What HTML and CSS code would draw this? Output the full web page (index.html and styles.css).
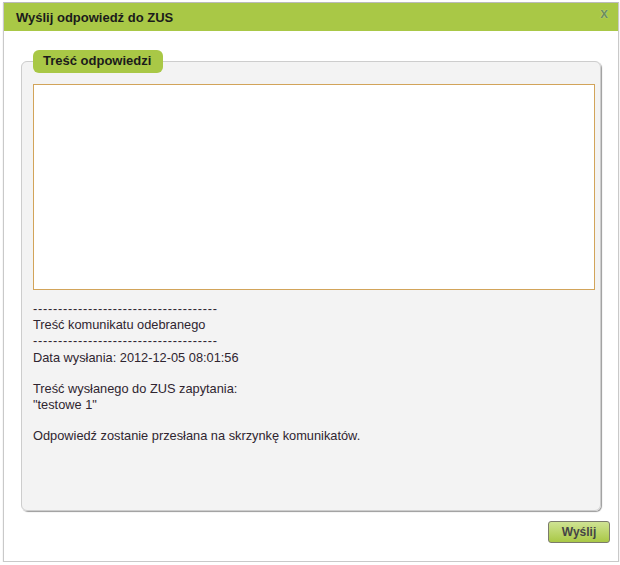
FILE: index.html
```html
<!DOCTYPE html>
<html lang="pl">
<head>
    <meta charset="UTF-8">
    <title>Wyślij odpowiedź do ZUS</title>
    <link rel="stylesheet" href="styles.css">
</head>
<body>
<div class="dialog">
    <div class="dialog-header">
        <span class="dialog-title">Wyślij odpowiedź do ZUS</span>
        <span class="dialog-close">x</span>
    </div>
    <div class="dialog-body">
        <fieldset class="panel">
            <legend>Treść odpowiedzi</legend>
            <textarea class="reply"></textarea>
            <div class="message">
                <p><span class="rule">-------------------------------------</span><br>Treść komunikatu odebranego<br><span class="rule">-------------------------------------</span><br>Data wysłania: 2012-12-05 08:01:56</p>
                <p>Treść wysłanego do ZUS zapytania:<br>"testowe 1"</p>
                <p>Odpowiedź zostanie przesłana na skrzynkę komunikatów.</p>
            </div>
        </fieldset>
        <div class="actions">
            <button class="send">Wyślij</button>
        </div>
    </div>
</div>
</body>
</html>
```

FILE: styles.css
```css
/* page */
body {
    margin: 0;
    padding: 2px 0 0 3px;
    background-color: #fff;
    font-family: "Liberation Sans", Arial, sans-serif;
    color: #333;
}

/* dialog window */
.dialog {
    width: 614px;
    height: 558px;
    border: 1px solid #c9c9c9;
    border-top-color: #bbb;
    background-color: #fff;
    box-shadow: 0 1px 1px #ccc;
}

.dialog-header {
    background-color: #a9c846;
    height: 28px;
    display: flex;
    align-items: center;
    justify-content: space-between;
    padding: 0 10px 0 12px;
}

.dialog-title {
    font-weight: bold;
    font-size: 13px;
    color: #1b1b1b;
}

.dialog-close {
    font-weight: bold;
    font-size: 14px;
    color: #6d8f58;
    margin-top: -8px;
    text-shadow: 0 0 1px #dce9c2;
}

.dialog-body {
    padding: 19px 8px 0 17px;
}

/* fieldset */
.panel {
    margin: 0;
    width: 580px;
    height: 461px;
    box-sizing: border-box;
    border: 1px solid #cdcdcd;
    border-radius: 6px;
    background-color: #f3f3f3;
    box-shadow: 1px 1px 1px #9a9a9a;
    padding: 11px 5px 0 11px;
}

.panel legend {
    background-color: #a9c846;
    border-radius: 6px;
    padding: 3px 12px 5px 10px;
    margin-left: 0;
    font-weight: bold;
    font-size: 13px;
    color: #1b1b1b;
}

.reply {
    display: block;
    width: 562px;
    height: 206px;
    box-sizing: border-box;
    border: 1px solid #d2a45a;
    background-color: #fff;
    resize: none;
    margin: 0;
}

.message {
    font-size: 12.8px;
    line-height: 16.2px;
    color: #2f2530;
    margin-top: 11px;
}

.message p {
    margin: 0 0 15px 0;
}

.rule {
    letter-spacing: 0.73px;
}

/* buttons */
.actions {
    display: flex;
    justify-content: flex-end;
    padding-top: 10px;
}

.send {
    width: 62px;
    height: 22px;
    border: 1px solid #7b7b6b;
    border-radius: 3px;
    background: linear-gradient(#cfe393, #a9c846);
    font-family: "Liberation Sans", Arial, sans-serif;
    font-weight: bold;
    font-size: 12px;
    color: #454545;
    cursor: pointer;
    padding: 0;
}
```
